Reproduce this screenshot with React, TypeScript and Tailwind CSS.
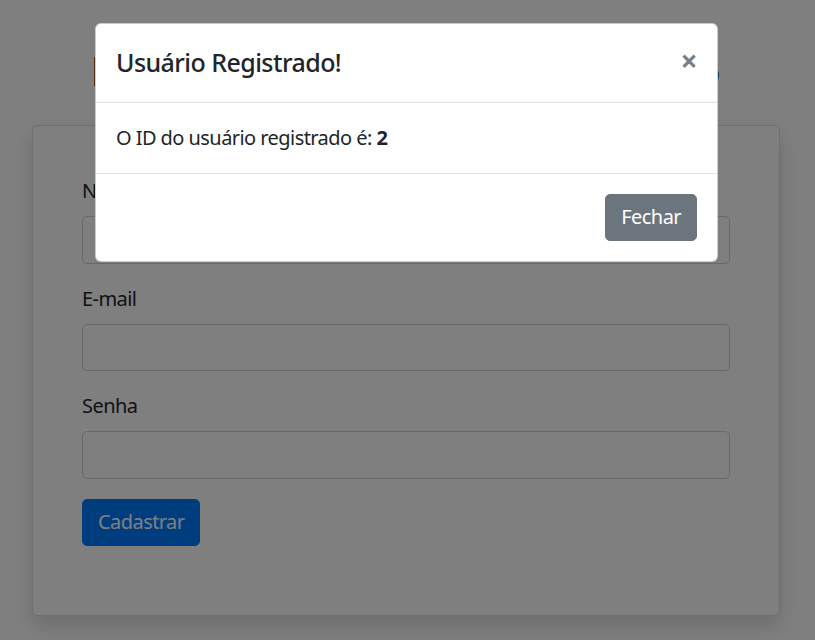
import React from "react";

export default function App() {
  const font = { fontFamily: '"Noto Sans", "Open Sans", sans-serif' };
  return (
    <div className="relative w-[815px] h-[640px] overflow-hidden bg-white text-[#212529] tracking-[-0.035em]" style={font}>
      {/* Underlying page */}
      <div className="pt-[47px]">
        <h1 className="text-center text-[40px] leading-[48px] font-medium text-[#212529] tracking-[-0.03em] pr-[5px] mb-[30px]">
          Formulário de Cadastro de Usuário
        </h1>
        <div className="ml-[32px] w-[748px] h-[491px] bg-white border border-black/[0.125] rounded-[5px] shadow-[0_10px_20px_rgba(0,0,0,0.15)] px-[49px] pt-[50px]">
          <div className="flex flex-col gap-[20px] text-[20px] leading-[30px]">
            <div className="flex flex-col gap-[10px]">
              <label>Nome</label>
              <div className="h-[47.5px] border border-[#ced4da] rounded-[5px] bg-white" />
            </div>
            <div className="flex flex-col gap-[10px]">
              <label>E-mail</label>
              <div className="h-[47.5px] border border-[#ced4da] rounded-[5px] bg-white" />
            </div>
            <div className="flex flex-col gap-[10px]">
              <label>Senha</label>
              <div className="h-[47.5px] border border-[#ced4da] rounded-[5px] bg-white" />
            </div>
            <div>
              <button className="h-[47.5px] px-[15px] bg-[#007bff] border border-[#007bff] text-white rounded-[5px] text-[20px] leading-[30px]">
                Cadastrar
              </button>
            </div>
          </div>
        </div>
      </div>

      {/* Backdrop */}
      <div className="absolute inset-0 bg-black/50" />

      {/* Modal */}
      <div className="absolute left-[95px] top-[23px] w-[623px] bg-white border border-black/20 rounded-[6px] flex flex-col">
        <div className="flex items-start justify-between p-[20px] border-b border-[#dee2e6]">
          <h5 className="text-[25px] leading-[37.5px] font-medium text-[#212529]">Usuário Registrado!</h5>
          <button className="-mx-[20px] -mb-[20px] -mt-[18px] p-[20px] text-[30px] leading-[30px] font-bold text-black opacity-50">×</button>
        </div>
        <div className="p-[20px] text-[20px] leading-[30px] text-[#212529]">
          O ID do usuário registrado é: <b className="font-bold">2</b>
        </div>
        <div className="flex justify-end p-[15px] border-t border-[#dee2e6]">
          <button className="m-[5px] h-[47.5px] px-[15px] bg-[#6c757d] border border-[#6c757d] text-white rounded-[5px] text-[20px] leading-[30px]">
            Fechar
          </button>
        </div>
      </div>
    </div>
  );
}
